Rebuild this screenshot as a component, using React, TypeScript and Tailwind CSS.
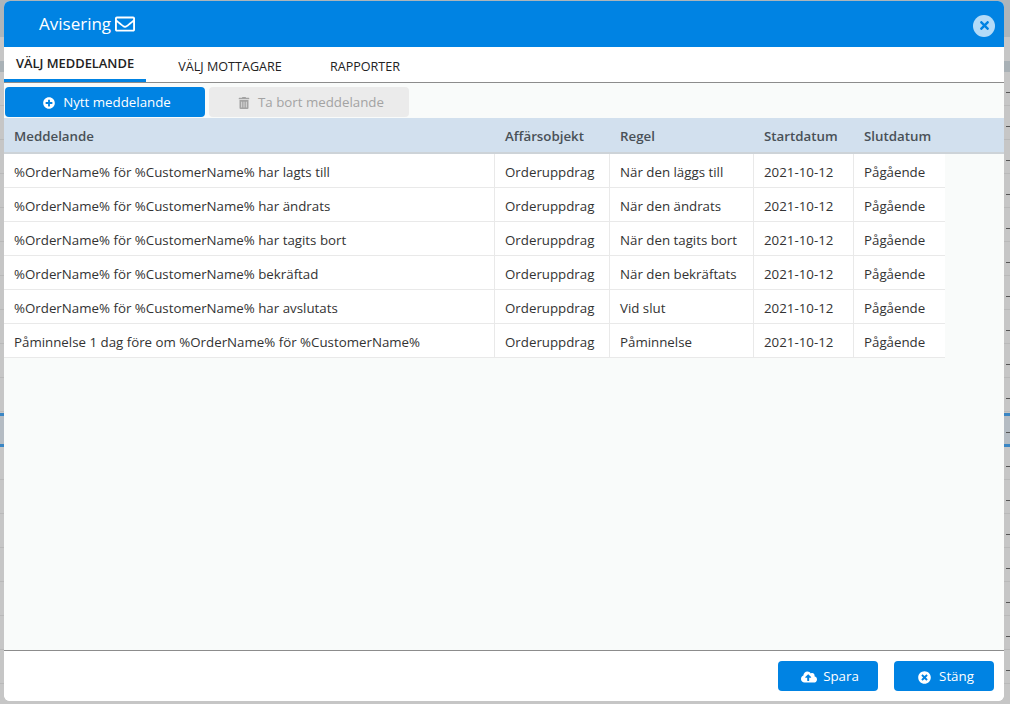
import { FaRegEnvelope, FaPlusCircle, FaTrashAlt, FaCloudUploadAlt, FaTimes, FaTimesCircle } from 'react-icons/fa';

const rows = [
  ['%OrderName% för %CustomerName% har lagts till', 'När den läggs till'],
  ['%OrderName% för %CustomerName% har ändrats', 'När den ändrats'],
  ['%OrderName% för %CustomerName% har tagits bort', 'När den tagits bort'],
  ['%OrderName% för %CustomerName% bekräftad', 'När den bekräftats'],
  ['%OrderName% för %CustomerName% har avslutats', 'Vid slut'],
  ['Påminnelse 1 dag före om %OrderName% för %CustomerName%', 'Påminnelse'],
];

// rows of the dimmed page behind the dialog
const backdropRows = Array.from({ length: 19 }, (_, i) => i);

export default function App() {
  return (
    <div className="relative h-[704px] w-[1010px] overflow-hidden bg-[#c6c6c6] pl-1 pt-px font-['Open_Sans',sans-serif] text-[13.3px] text-[#333]">
      <div className="absolute inset-0 flex flex-col">
        <div className="h-[37px] shrink-0 bg-[#adb5ba]" />
        <div className="h-[24px] shrink-0" />
        <div className="h-[11px] shrink-0 bg-[#a9b1b6]" />
        {backdropRows.map((i) => (
          <div key={i} className="relative h-[34px] shrink-0 border-b border-[#b9b9b9]">
            {i === 10 && <div className="absolute inset-x-0 top-px h-[34px] border-y-[3px] border-[#3a86c4] bg-[#b5bcc3]" />}
            <div className="absolute right-0 top-[20px] h-px w-[4px] bg-[#555]" />
          </div>
        ))}
      </div>

      <div className="relative flex h-[700px] w-[1000px] flex-col overflow-hidden rounded-md bg-white">
        <div className="flex h-[46px] shrink-0 items-center justify-between bg-[#0083e3] pl-[35px] pr-[9px] text-white">
          <div className="flex items-center gap-1 text-[17px]">
            <span>Avisering</span>
            <FaRegEnvelope size={20} />
          </div>
          <div className="mt-[3px] flex h-[22px] w-[22px] items-center justify-center rounded-full bg-[#b3dbf8] text-[#0083e3]">
            <FaTimes size={13} />
          </div>
        </div>

        <div className="flex h-[36px] shrink-0 border-b border-[#8c8c8c] bg-white text-[12.6px] text-[#222]">
          <div className="flex h-[35px] w-[142px] items-start justify-center border-b-[3px] border-[#0083e3] pt-[7px] text-[12.9px] font-semibold">VÄLJ MEDDELANDE</div>
          <div className="flex w-[168px] items-center justify-center pt-[6px]">VÄLJ MOTTAGARE</div>
          <div className="flex w-[102px] items-center justify-center pt-[6px]">RAPPORTER</div>
        </div>

        <div className="flex min-h-0 flex-1 flex-col bg-[#f9fbfa]">
          <div className="flex h-[35px] shrink-0 items-start gap-1 pl-px pt-[4px]">
            <button className="flex h-[30px] w-[200px] items-center justify-center gap-2 rounded bg-[#0083e3] pl-1 pt-px font-medium text-white">
              <FaPlusCircle size={12} />
              Nytt meddelande
            </button>
            <button className="flex h-[30px] w-[200px] items-center justify-center gap-2 rounded bg-[#ebebeb] pl-1 pt-px font-medium text-[#a3a3a3]">
              <FaTrashAlt size={12} />
              Ta bort meddelande
            </button>
          </div>

          <div className="flex h-[36px] shrink-0 items-center border-b-2 border-[#cdd3d8] bg-[#d2e0ee] pt-[3px] font-semibold text-[#495057]">
            <div className="w-[491px] pl-2.5">Meddelande</div>
            <div className="w-[115px] pl-2.5">Affärsobjekt</div>
            <div className="w-[144px] pl-2.5">Regel</div>
            <div className="w-[100px] pl-2.5">Startdatum</div>
            <div className="w-[92px] pl-2.5">Slutdatum</div>
          </div>

          {rows.map(([message, rule]) => (
            <div key={message} className="flex h-[34px] w-[941px] shrink-0 border-b border-[#e9e9e9] bg-white">
              <div className="flex w-[490px] items-center pl-2.5 pt-[4px]">{message}</div>
              <div className="flex w-[115px] items-center border-l border-[#e9e9e9] pl-2.5 pt-[4px]">Orderuppdrag</div>
              <div className="flex w-[144px] items-center border-l border-[#e9e9e9] pl-2.5 pt-[4px]">{rule}</div>
              <div className="flex w-[100px] items-center border-l border-[#e9e9e9] pl-2.5 pt-[4px]">2021-10-12</div>
              <div className="flex w-[92px] items-center border-l border-[#e9e9e9] pl-2.5 pt-[4px]">Pågående</div>
            </div>
          ))}
        </div>

        <div className="flex h-[51px] shrink-0 items-start justify-end gap-4 border-t border-[#8c8c8c] bg-white pr-2.5 pt-[10px]">
          <button className="flex h-[30px] w-[100px] items-center justify-center gap-1.5 rounded bg-[#0083e3] pl-1 pt-[2px] text-white">
            <FaCloudUploadAlt size={16} />
            Spara
          </button>
          <button className="flex h-[30px] w-[100px] items-center justify-center gap-2 rounded bg-[#0083e3] pl-1 pt-[2px] text-white">
            <FaTimesCircle size={13} />
            Stäng
          </button>
        </div>
      </div>
    </div>
  );
}
